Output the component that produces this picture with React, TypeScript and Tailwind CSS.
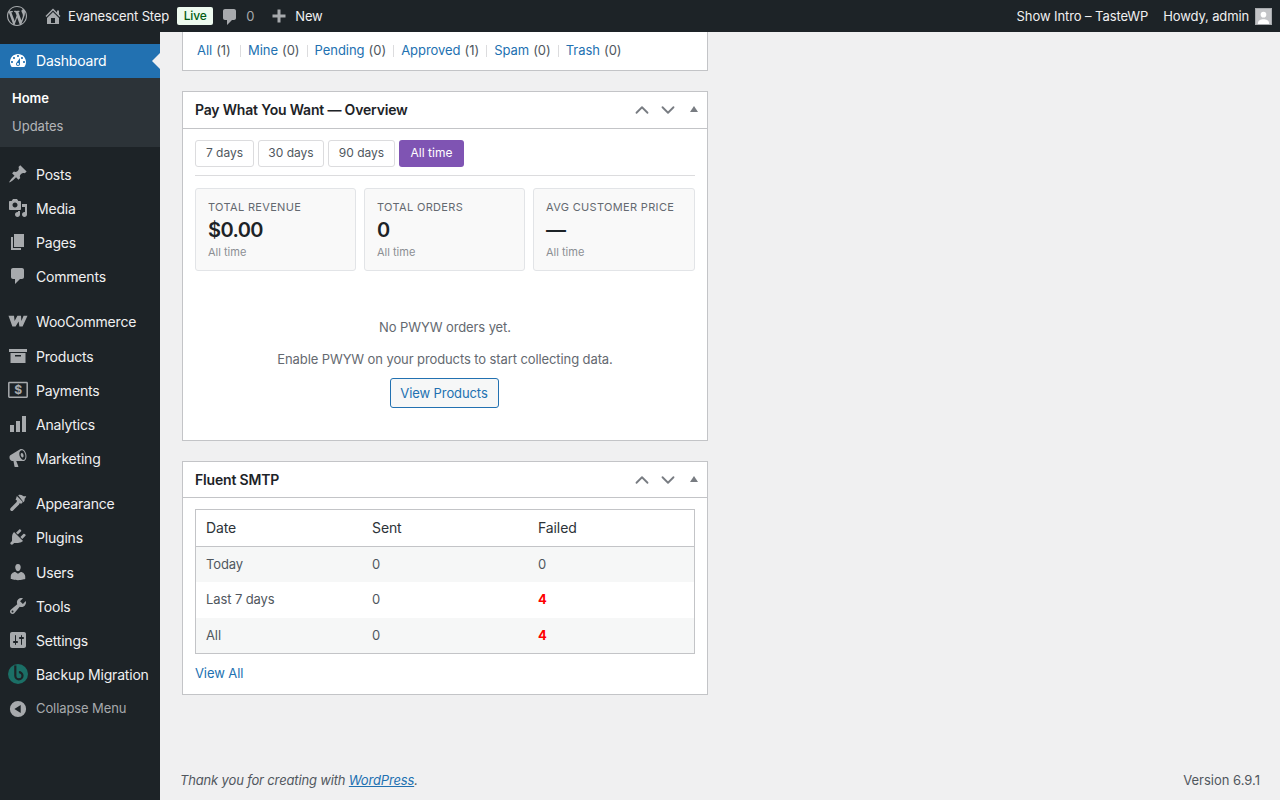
import React from "react";
import { ChevronUp, ChevronDown } from "lucide-react";

const ICONS: Record<string, string> = {
  logo: "M20 10c0-5.51-4.49-10-10-10C4.48 0 0 4.49 0 10c0 5.52 4.48 10 10 10 5.51 0 10-4.48 10-10zM7.78 15.37L4.37 6.22c.55-.02 1.17-.08 1.17-.08.5-.06.44-1.13-.06-1.11 0 0-1.45.11-2.37.11-.18 0-.37 0-.58-.01C4.12 2.69 6.87 1.11 10 1.11c2.33 0 4.45.87 6.05 2.34-.68-.11-1.65.39-1.65 1.58 0 .74.45 1.36.9 2.1.35.61.55 1.36.55 2.46 0 1.49-1.4 5-1.4 5l-3.03-8.37c.54-.02.82-.17.82-.17.5-.05.44-1.25-.06-1.22 0 0-1.44.12-2.38.12-.87 0-2.33-.12-2.33-.12-.5-.03-.56 1.2-.06 1.22l.92.08 1.26 3.41zM17.41 10c.24-.64.74-1.87.43-4.25.7 1.29 1.05 2.71 1.05 4.25 0 3.29-1.73 6.24-4.4 7.78.97-2.59 1.94-5.2 2.92-7.78zM6.1 18.09C3.12 16.65 1.11 13.53 1.11 10c0-1.3.23-2.48.72-3.59C3.25 10.3 4.67 14.2 6.1 18.09zm4.03-6.63l2.58 6.98c-.86.29-1.76.45-2.71.45-.79 0-1.57-.11-2.29-.33.81-2.38 1.62-4.72 2.42-7.1z",
  home: "M16 8.5l1.53 1.53-1.06 1.06L10 4.62l-6.47 6.47-1.06-1.06L10 2.5l4 4v-2h2v4zm-6-2.46l6 5.99V18H4v-5.97zM12 17v-5H8v5h4z",
  comment: "M5 2h9c1.1 0 2 .9 2 2v7c0 1.1-.9 2-2 2h-2l-5 5v-5H5c-1.1 0-2-.9-2-2V4c0-1.1.9-2 2-2z",
  plus: "M8.5 3.5h3v5h5v3h-5v5h-3v-5h-5v-3h5z",
  dashboard: "M3.76 16h12.48c1.1-1.37 1.76-3.11 1.76-5 0-4.42-3.58-8-8-8s-8 3.58-8 8c0 1.89.66 3.63 1.76 5zM10 4c.55 0 1 .45 1 1s-.45 1-1 1-1-.45-1-1 .45-1 1-1zM6 6c.55 0 1 .45 1 1s-.45 1-1 1-1-.45-1-1 .45-1 1-1zm8 0c.55 0 1 .45 1 1s-.45 1-1 1-1-.45-1-1 .45-1 1-1zm-5.37 5.55L12 7v6c0 1.1-.9 2-2 2s-2-.9-2-2c0-.57.24-1.08.63-1.45zM4 10c.55 0 1 .45 1 1s-.45 1-1 1-1-.45-1-1 .45-1 1-1zm12 0c.55 0 1 .45 1 1s-.45 1-1 1-1-.45-1-1 .45-1 1-1zm-5 3c0-.55-.45-1-1-1s-1 .45-1 1 .45 1 1 1 1-.45 1-1z",
  posts: "M10.44 3.02l1.82-1.82 6.36 6.35-1.83 1.82c-1.05-.68-2.48-.57-3.41.36l-.75.75c-.92.93-1.04 2.35-.35 3.41l-1.83 1.82-2.41-2.41-2.8 2.79c-.42.42-3.38 2.71-3.8 2.29s1.86-3.39 2.28-3.81l2.79-2.79L4.1 9.36l1.83-1.82c1.05.69 2.48.57 3.4-.36l.75-.75c.93-.92 1.05-2.35.36-3.41z",
  media: "M13 11V4c0-.55-.45-1-1-1h-1.67L9 1H5L3.67 3H2c-.55 0-1 .45-1 1v7c0 .55.45 1 1 1h10c.55 0 1-.45 1-1zM7 4.5c1.38 0 2.5 1.12 2.5 2.5S8.38 9.5 7 9.5 4.5 8.38 4.5 7 5.62 4.5 7 4.5zM14 6h5v10.5c0 1.38-1.12 2.5-2.5 2.5S14 17.88 14 16.5s1.12-2.5 2.5-2.5c.17 0 .34.02.5.05V9h-3V6zm-4 8.05V13h2v3.5c0 1.38-1.12 2.5-2.5 2.5S7 17.88 7 16.5 8.12 14 9.5 14c.17 0 .34.02.5.05z",
  pages: "M6 15V2h10v13H6zm-1 1h8v2H3V5h2v11z",
  woo: "M.5 4.8H6L6.6 10l2.8-5.2H13l.4 5.2 2.2-5.2h3.9l-4.9 10.7h-3.2l-.8-5-3 5H4.4z",
  products: "M1 3h18v3H1zM2.5 7h15v10h-15zM7 9v1.5h6V9z",
  analytics: "M2 11h4v7H2zM8 7h4v11H8zM14 2h4v16h-4z",
  marketing: "M18.15 5.94c.46 1.62.38 3.22-.02 4.48-.42 1.28-1.26 2.18-2.3 2.48-.16.06-.26.06-.4.06-.06.02-.12.02-.18.02-.06.02-.14.02-.22.02h-6.8l2.22 5.5c.02.14-.06.26-.14.34-.08.1-.24.16-.34.16H6.95c-.1 0-.26-.06-.34-.16-.08-.08-.16-.2-.14-.34l-1-5.5H4.25l-.02-.02c-.5.06-1.08-.18-1.54-.62s-.88-1.08-1.06-1.88c-.24-.8-.2-1.56-.02-2.2.18-.62.58-1.08 1.06-1.3l.02-.02 9-5.4c.1-.06.18-.1.24-.16.06-.04.14-.08.24-.12.16-.08.28-.12.5-.18 1.04-.3 2.24.1 3.22 1 .98.88 1.8 2.24 2.26 3.86zm-2.58 5.98h-.02c.4-.1.74-.34 1.04-.7.58-.7.86-1.76.86-3.04-.02-.64-.12-1.3-.3-2-.2-.72-.48-1.38-.84-1.96-.7-1.18-1.64-1.86-2.56-1.86-.22 0-.4.02-.56.08h-.02c-.96.3-1.6 1.2-1.8 2.52-.1.68-.08 1.44.1 2.2.04.16.06.4.1.54.2.78.56 1.48.94 2.08.8 1.28 1.8 2.04 2.7 2.04.14 0 .24 0 .36-.04zm-1.64-2.72c-.5-.28-.94-.94-1.14-1.74-.2-.78-.12-1.52.18-1.94.18-.26.42-.42.74-.46.1-.02.2-.02.34 0 .62.18 1.18.94 1.44 1.9.2.82.12 1.54-.2 1.98-.18.26-.44.42-.74.46-.2.02-.42 0-.62-.2z",
  appearance: "M10.2 2.2c1.6-.7 3.5-.2 4.6.6 1 .7 1.9.7 3.4.3-.2 1.2-.8 2.1-1.6 2.6.2 1.3-.1 2.6-1 3.6zM8.9 3.1l6 6-1.6 1.6-1.8-.4-.4 1.1-6 6c-.8.8-1.8.8-2.5.1s-.7-1.7.1-2.5l5.9-5.9.4-1.5-1.4-.8z",
  plugins: "M13.11 4.36L9.87 7.6 8 5.73l3.24-3.24c.35-.34 1.05-.2 1.56.32.52.51.66 1.21.31 1.55zm-8 1.77l.91-1.12 9.01 9.01-1.19.84c-.71.71-2.63 1.16-3.82 1.16H6.14L4.9 17.26c-.59.59-1.54.59-2.12 0-.59-.58-.59-1.53 0-2.12l1.24-1.24v-3.88c0-1.13.4-3.19 1.09-3.89zm7.26 3.97l3.24-3.24c.34-.35 1.04-.21 1.55.31.52.51.66 1.21.31 1.55l-3.24 3.25z",
  users: "M10 9.25c-2.27 0-2.73-3.44-2.73-3.44C7 4.02 7.82 2 9.97 2c2.16 0 2.98 2.02 2.71 3.81 0 0-.41 3.44-2.68 3.44zm0 2.57L12.72 10c2.39 0 4.52 2.33 4.52 4.53v2.49s-3.65 1.13-7.24 1.13c-3.65 0-7.24-1.13-7.24-1.13v-2.49c0-2.25 1.94-4.48 4.47-4.48z",
  tools: "M16.68 9.77c-1.34 1.34-3.3 1.67-4.95.99l-5.41 6.52c-.99.99-2.59.99-3.58 0s-.99-2.59 0-3.57l6.52-5.42c-.68-1.65-.35-3.61.99-4.95 1.28-1.28 3.12-1.62 4.72-1.06l-2.89 2.89 2.82 2.82 2.86-2.87c.53 1.58.18 3.39-1.08 4.65zM3.81 16.21c.4.39 1.04.39 1.43 0 .4-.4.4-1.04 0-1.43-.39-.4-1.03-.4-1.43 0-.39.39-.39 1.03 0 1.43z",
  settings: "M18 16V4c0-1.1-.9-2-2-2H4c-1.1 0-2 .9-2 2v12c0 1.1.9 2 2 2h12c1.1 0 2-.9 2-2zM8 11h1c.55 0 1 .45 1 1s-.45 1-1 1H8v1.5c0 .28-.22.5-.5.5s-.5-.22-.5-.5V13H6c-.55 0-1-.45-1-1s.45-1 1-1h1V5.5c0-.28.22-.5.5-.5s.5.22.5.5V11zm5-2h-1c-.55 0-1-.45-1-1s.45-1 1-1h1V5.5c0-.28.22-.5.5-.5s.5.22.5.5V7h1c.55 0 1 .45 1 1s-.45 1-1 1h-1v5.5c0 .28-.22.5-.5.5s-.5-.22-.5-.5V9z",
  collapse: "M10 1a9 9 0 1 0 0 18 9 9 0 0 0 0-18zm3 4.5v9L6 10z",
};

function Dashicon({ name, className }: { name: string; className?: string }) {
  return (
    <svg viewBox="0 0 20 20" className={className} fill="currentColor" fillRule="evenodd">
      <path d={ICONS[name]} />
    </svg>
  );
}

function PaymentsIcon() {
  return (
    <svg viewBox="0 0 20 20" className="h-5 w-5 text-[#a7aaad]">
      <rect x="0.8" y="2.6" width="18.4" height="14.6" rx="0.6" fill="none" stroke="currentColor" strokeWidth="1.5" />
      <text x="10" y="14.4" textAnchor="middle" fontSize="12" fontWeight="700" fontFamily="Inter" fill="currentColor">
        $
      </text>
    </svg>
  );
}

function BackupIcon() {
  return (
    <svg viewBox="0 0 20 20" className="h-5 w-5">
      <circle cx="10" cy="10" r="10" fill="#1b6f66" />
      <path d="M7.3 1.5v10.2a3.6 3.6 0 1 0 3.6-3.6" fill="none" stroke="#1d2327" strokeWidth="2.2" />
    </svg>
  );
}

type MenuEntry = { label: string; icon: string; h?: string };

const MENU_GROUPS: MenuEntry[][] = [
  [
    { label: "Posts", icon: "posts" },
    { label: "Media", icon: "media" },
    { label: "Pages", icon: "pages" },
    { label: "Comments", icon: "comment" },
  ],
  [
    { label: "WooCommerce", icon: "woo", h: "h-[35px] pb-px" },
    { label: "Products", icon: "products" },
    { label: "Payments", icon: "payments" },
    { label: "Analytics", icon: "analytics" },
    { label: "Marketing", icon: "marketing" },
  ],
  [
    { label: "Appearance", icon: "appearance" },
    { label: "Plugins", icon: "plugins", h: "h-[35px] pb-px" },
    { label: "Users", icon: "users" },
    { label: "Tools", icon: "tools" },
    { label: "Settings", icon: "settings" },
    { label: "Backup Migration", icon: "backup" },
  ],
];

function MenuItem({ item }: { item: MenuEntry }) {
  return (
    <div className={`flex items-center text-[14px] tracking-[-0.2px] text-[#f0f0f1] ${item.h ?? "h-[34px]"}`}>
      <span className="flex w-9 shrink-0 justify-center">
        {item.icon === "payments" ? (
          <PaymentsIcon />
        ) : item.icon === "backup" ? (
          <BackupIcon />
        ) : (
          <Dashicon name={item.icon} className="h-5 w-5 text-[#a7aaad]" />
        )}
      </span>
      <span>{item.label}</span>
    </div>
  );
}

function Sidebar() {
  return (
    <aside className="flex w-40 shrink-0 flex-col bg-[#1d2327] pt-3">
      <div className="relative flex h-[34px] items-center bg-[#2271b1] pb-px text-[14px] tracking-[-0.2px] text-white">
        <span className="flex w-9 shrink-0 justify-center">
          <Dashicon name="dashboard" className="h-5 w-5" />
        </span>
        <span>Dashboard</span>
        <span className="absolute right-0 top-[9px] h-0 w-0 border-y-[8px] border-r-[8px] border-y-transparent border-r-[#f0f0f1]" />
      </div>
      <div className="flex h-[69px] flex-col bg-[#2c3338] pl-3 pt-[7px] text-[13px]">
        <div className="flex h-[28px] items-center font-semibold text-white">Home</div>
        <div className="flex h-[28px] items-center text-[#f0f0f1b3]">Updates</div>
      </div>
      <div className="mt-[10px] flex flex-col gap-[11px]">
        {MENU_GROUPS.map((group, i) => (
          <div key={i} className="flex flex-col">
            {group.map((item) => (
              <MenuItem key={item.label} item={item} />
            ))}
          </div>
        ))}
      </div>
      <div className="flex h-[33px] items-center pt-[2px] text-[13px] tracking-[-0.1px] text-[#a7aaad]">
        <span className="flex w-9 shrink-0 justify-center">
          <Dashicon name="collapse" className="h-[18px] w-[18px] text-[#a7aaad]" />
        </span>
        <span>Collapse Menu</span>
      </div>
    </aside>
  );
}

function TopBar() {
  return (
    <header className="flex h-8 shrink-0 items-center justify-between bg-[#1d2327] text-[13px] tracking-[-0.13px] text-[#f0f0f1]">
      <div className="flex items-center">
        <span className="ml-[7px] flex w-5 items-center">
          <Dashicon name="logo" className="h-5 w-5 text-[#a7aaad]" />
        </span>
        <Dashicon name="home" className="ml-[16px] h-5 w-5 text-[#a7aaad]" />
        <span className="ml-[5px] pt-[2px]">Evanescent Step</span>
        <span className="ml-2 flex h-[18px] w-9 items-center justify-center rounded-[2px] bg-[#edfaef] text-[12px] font-medium text-[#005c12]">
          Live
        </span>
        <Dashicon name="comment" className="ml-[7px] mt-[2px] h-5 w-5 text-[#a7aaad]" />
        <span className="ml-[6px] pt-[2px] text-[#a7aaad]">0</span>
        <Dashicon name="plus" className="ml-[15px] h-5 w-5 text-[#a7aaad]" />
        <span className="ml-[6px] pt-[2px]">New</span>
      </div>
      <div className="flex items-center pr-2">
        <span className="pt-[2px] tracking-[-0.08px]">Show Intro – TasteWP</span>
        <span className="ml-[15px] pt-[2px]">Howdy, admin</span>
        <span className="ml-[6px] flex h-[17px] w-[17px] items-end justify-center overflow-hidden border border-[#a7aaad] bg-[#c3c4c7]">
          <svg viewBox="0 0 16 16" className="h-[15px] w-[15px] text-white" fill="currentColor">
            <circle cx="8" cy="6" r="3" />
            <path d="M2 16c0-4 3-5 6-5s6 1 6 5z" />
          </svg>
        </span>
      </div>
    </header>
  );
}

function Postbox({ title, headerH, children }: { title: string; headerH: string; children: React.ReactNode }) {
  return (
    <section className="border border-[#c3c4c7] bg-white">
      <div className={`flex items-center justify-between border-b border-[#c3c4c7] pl-3 pr-[5px] ${headerH}`}>
        <h2 className="text-[14px] font-semibold tracking-[-0.18px] text-[#1d2327]">{title}</h2>
        <div className="flex items-center text-[#787c82]">
          <ChevronUp className="h-[22px] w-[26px]" strokeWidth={2} />
          <ChevronDown className="h-[22px] w-[26px]" strokeWidth={2} />
          <span className="mb-[2px] ml-[9px] mr-[4px] h-0 w-0 border-x-[4px] border-b-[6px] border-x-transparent border-b-[#787c82]" />
        </div>
      </div>
      {children}
    </section>
  );
}

const FILTERS = [
  ["All", "(1)"],
  ["Mine", "(0)"],
  ["Pending", "(0)"],
  ["Approved", "(1)"],
  ["Spam", "(0)"],
  ["Trash", "(0)"],
];

function CommentFilters() {
  return (
    <section className="flex h-[39px] items-start border border-t-0 border-[#c3c4c7] bg-white pl-[14px] pt-[9px] text-[13px] tracking-[-0.04px] text-[#50575e]">
      {FILTERS.map(([name, count], i) => (
        <span key={name} className="flex items-center">
          {i > 0 && <span className="mx-[7px] h-3 w-px bg-[#dcdcde]" />}
          <span className={`flex ${i === 0 ? "w-[36px]" : ""}`}>
            <span className="text-[#2271b1]">{name}</span>
            <span className="ml-1">{count}</span>
          </span>
        </span>
      ))}
    </section>
  );
}

const RANGES = [
  { label: "7 days", w: "w-[59px]" },
  { label: "30 days", w: "w-[66px]" },
  { label: "90 days", w: "w-[67px]" },
];

const STATS = [
  { label: "TOTAL REVENUE", value: "$0.00" },
  { label: "TOTAL ORDERS", value: "0" },
  { label: "AVG CUSTOMER PRICE", value: "—" },
];

function PwywPanel() {
  return (
    <Postbox title="Pay What You Want — Overview" headerH="h-[37px] pb-px">
      <div className="px-3 pt-[11px]">
        <div className="flex gap-1 border-b border-[#dcdcde] pb-[8px]">
          {RANGES.map((r) => (
            <span
              key={r.label}
              className={`flex h-[27px] items-center justify-center rounded-[3px] border border-[#dcdcde] bg-white pb-[2px] text-[12px] text-[#50575e] ${r.w}`}
            >
              {r.label}
            </span>
          ))}
          <span className="flex h-[27px] w-[65px] items-center justify-center rounded-[3px] bg-[#7f54b3] pb-[2px] text-[12px] text-white">
            All time
          </span>
        </div>
        <div className="mt-3 grid grid-cols-[161px_161px_162px] gap-2">
          {STATS.map((s) => (
            <div key={s.label} className="flex h-[83px] flex-col rounded-[3px] border border-[#e2e4e7] bg-[#f9f9f9] pl-3 pt-[11px]">
              <span className="text-[11px] leading-[14px] tracking-[0.33px] text-[#646970]">{s.label}</span>
              <span className="mt-[4px] text-[20px] font-semibold leading-[24px] tracking-[-0.6px] text-[#1d2327]">{s.value}</span>
              <span className="mt-[3px] text-[11px] leading-[14px] text-[#8c8f94]">All time</span>
            </div>
          ))}
        </div>
        <div className="flex h-[169px] flex-col items-center pt-[48px] text-[13px] tracking-[-0.1px] text-[#646970]">
          <span className="leading-[16px]">No PWYW orders yet.</span>
          <span className="mt-4 leading-[16px]">Enable PWYW on your products to start collecting data.</span>
          <span className="mr-[2px] mt-[11px] flex h-[30px] w-[109px] items-center justify-center rounded-[3px] border border-[#2271b1] bg-[#f6f7f7] pt-[2px] text-[#2271b1]">
            View Products
          </span>
        </div>
      </div>
    </Postbox>
  );
}

const SMTP_ROWS = [
  { date: "Today", sent: "0", failed: "0", shaded: true },
  { date: "Last 7 days", sent: "0", failed: "4", shaded: false },
  { date: "All", sent: "0", failed: "4", shaded: true },
];

function SmtpPanel() {
  return (
    <Postbox title="Fluent SMTP" headerH="h-[36px]">
      <div className="px-3 pt-[11px]">
        <div className="border border-[#c3c4c7] text-[13px] tracking-[-0.1px] text-[#50575e]">
          <div className="grid h-[37px] grid-cols-[166px_166px_1fr] items-center border-b border-[#c3c4c7] pb-px pl-[10px] text-[14px] text-[#2c3338]">
            <span>Date</span>
            <span>Sent</span>
            <span>Failed</span>
          </div>
          {SMTP_ROWS.map((row) => (
            <div
              key={row.date}
              className={`grid h-[35.33px] grid-cols-[166px_166px_1fr] items-center pl-[10px] ${row.shaded ? "bg-[#f6f7f7]" : "bg-white"}`}
            >
              <span>{row.date}</span>
              <span>{row.sent}</span>
              <span className={row.failed === "4" ? "font-bold text-[#ff0000]" : ""}>{row.failed}</span>
            </div>
          ))}
        </div>
        <div className="flex h-[40px] items-center text-[13px] tracking-[-0.1px] text-[#2271b1]">View All</div>
      </div>
    </Postbox>
  );
}

export default function App() {
  return (
    <div className="flex h-screen flex-col overflow-hidden bg-[#f0f0f1] font-['Inter',sans-serif]">
      <TopBar />
      <div className="flex min-h-0 flex-1">
        <Sidebar />
        <main className="flex flex-1 flex-col">
          <div className="ml-[22px] flex w-[526px] flex-col gap-5">
            <CommentFilters />
            <PwywPanel />
            <SmtpPanel />
          </div>
          <footer className="mt-auto flex h-[40px] items-end justify-between pb-[10px] pl-5 pr-5 text-[13px] text-[#50575e]">
            <span className="italic tracking-[-0.16px]">
              Thank you for creating with <span className="text-[#2271b1] underline">WordPress</span>.
            </span>
            <span>Version 6.9.1</span>
          </footer>
        </main>
      </div>
    </div>
  );
}
